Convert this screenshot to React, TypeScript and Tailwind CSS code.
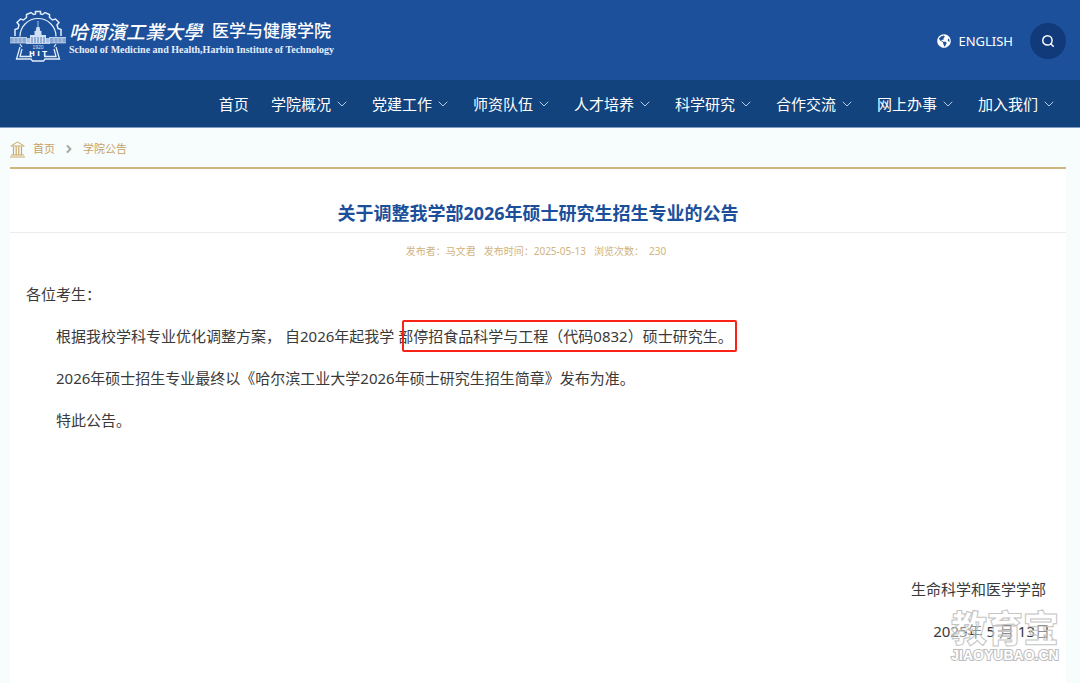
import { ChevronDown, ChevronRight, Search } from "lucide-react";
import { FaGlobeAmericas } from "react-icons/fa";

const navItems = [
    { title: "首页", hasMenu: false },
    { title: "学院概况", hasMenu: true },
    { title: "党建工作", hasMenu: true },
    { title: "师资队伍", hasMenu: true },
    { title: "人才培养", hasMenu: true },
    { title: "科学研究", hasMenu: true },
    { title: "合作交流", hasMenu: true },
    { title: "网上办事", hasMenu: true },
    { title: "加入我们", hasMenu: true },
];

function Emblem() {
    return (
        <svg width="56" height="52" viewBox="0 0 56 52" fill="none" stroke="#e3edfa" aria-hidden="true">
            {/* gear ring */}
            <path d="M5 26v-6.500l3-1 1-3.500-2-2.500L10.500 9l3 1 3-2.500V4.500L21 2.500l2.500 2 2-.5V1.500h5V4l2 .5 2.500-2 4.500 2v3l3 2.500 3-1L49 12.500 47 15l1 3.500 3 1V26" strokeWidth="1.500" />
            <path d="M10 26.500a18 18 0 0 1 36 0M10 34l2 3M46 34l-2 3" strokeWidth="1.200" />
            {/* main building */}
            <g fill="#cfe0f5" stroke="none">
                <path d="M27.600 11h.8v7h-.8zM26.500 17h3l.8 4h-4.600zM24.500 21h7v4h-7zM20 25h16v8H20z" />
                <path d="M0 27h17v6H0zM39 27h17v6H39z" fillOpacity="0.600" />
                <path d="M16 28h24v6H16z" fillOpacity="0.800" />
            </g>
            <path d="M0 27.500h17M39 27.500h17M0 33h56M4 28v5M8 28v5M12 28v5M44 28v5M48 28v5M52 28v5" strokeWidth="0.600" />
            <path d="M22 27v6M25 27v6M28 27v6M31 27v6M34 27v6" stroke="#1c509b" strokeWidth="0.700" />
            {/* open book */}
            <path d="M10 37 6.500 49H21l1.500 2h11l1.500-2h14.500L46 37M12 39l-2 7.500h12M44 39l2 7.500H34" strokeWidth="1.300" />
            <text x="28" y="39" textAnchor="middle" fill="#cfe0f5" stroke="none" className="font-['Liberation_Sans'] text-[5px]">1920</text>
            <text x="28" y="46" textAnchor="middle" fill="#fff" stroke="none" className="font-['DejaVu_Sans'] text-[7px] font-bold">H I T</text>
        </svg>
    );
}

function HallIcon() {
    return (
        <svg width="15" height="17" viewBox="0 0 15 17" fill="none" stroke="#cda869" aria-hidden="true">
            <path d="M0 16h15M1 14h13M.5 5h14M1.500 4.500l6-3.500 6 3.500" />
            <path d="M3.500 5.500V14M6.200 5.500V14M8.800 5.500V14M11.500 5.500V14" strokeWidth="1.200" />
        </svg>
    );
}

export default function App() {
    return (
        <div className="min-h-screen bg-[#f6fdfc] font-['Noto_Sans','Noto_Sans_CJK_SC',sans-serif]">
            <header className="bg-[#1c509b] text-white">
                <div className="flex h-20 items-center justify-between pl-[10px] pr-[14px]">
                    <a href="#" className="flex items-center gap-[3px] pb-2">
                        <Emblem />
                        <span className="flex flex-col pt-1">
                            <span className="flex items-center gap-[10px] whitespace-nowrap leading-6">
                                <span className="font-['Noto_Sans_CJK_TC',sans-serif] text-[19px] font-medium italic">哈爾濱工業大學</span>
                                <span className="text-[17px] font-medium">医学与健康学院</span>
                            </span>
                            <span className="whitespace-nowrap font-['Liberation_Serif',serif] text-[10px] font-bold leading-[14px] text-[#e6eefa]">
                                School of Medicine and Health,Harbin Institute of Technology
                            </span>
                        </span>
                    </a>
                    <div className="flex items-center gap-[17px] pt-[2px]">
                        <a href="#" className="flex items-center gap-[7px] text-[13px] leading-5">
                            <FaGlobeAmericas size={14} />
                            ENGLISH
                        </a>
                        <button type="button" aria-label="搜索" className="flex size-9 items-center justify-center rounded-full bg-[#113a7b]">
                            <Search size={14} strokeWidth={2.500} />
                        </button>
                    </div>
                </div>
                <nav className="flex h-12 items-center justify-end gap-[22px] border-b border-[#7f9dc1] bg-[#12437d] pr-[23px]">
                    {navItems.map((item) => (
                        <a key={item.title} href="#" className="flex items-center gap-[3px] whitespace-nowrap text-[15px] leading-6">
                            {item.title}
                            {item.hasMenu && <ChevronDown size={16} strokeWidth={1.500} className="text-[#b9cbe2]" />}
                        </a>
                    ))}
                </nav>
            </header>

            <main className="ml-[10px] mr-[14px]">
                <div className="flex h-[41px] items-center gap-2 border-b-2 border-[#d0b47f] pt-[3px] text-[11px] text-[#c6a266]">
                    <HallIcon />
                    <a href="#">首页</a>
                    <ChevronRight size={12} strokeWidth={4} className="text-[#a9a9a4]" />
                    <a href="#">学院公告</a>
                </div>

                <article className="relative min-h-[514px] bg-white">
                    <h1 className="border-b border-[#ececec] pb-[5px] pt-[30px] text-center text-[18px] font-bold leading-7 text-[#1c4f9b]">
                        关于调整我学部2026年硕士研究生招生专业的公告
                    </h1>
                    <p className="flex justify-center gap-2 pr-1 pt-2 text-[10px] leading-5 text-[#cfb481]">
                        <span>发布者：马文君</span>
                        <span>发布时间：2025-05-13</span>
                        <span>浏览次数：&nbsp; 230</span>
                    </p>

                    <div className="px-4 pt-3 text-[15px] leading-[42px] text-[#3a3a3a]">
                        <p>各位考生：</p>
                        <p className="indent-[30px]">
                            <span className="mr-1">根据我校学科专业优化调整方案，</span>自2026年起我学
                            <mark className="relative ml-1 bg-transparent text-inherit">
                                部停招食品科学与工程（代码0832）硕士研究生。
                                <span className="absolute -inset-y-[6px] -right-1 left-1 rounded-xs border-2 border-[#fa2117]" />
                            </mark>
                        </p>
                        <p className="indent-[30px]">2026年硕士招生专业最终以《哈尔滨工业大学2026年硕士研究生招生简章》发布为准。</p>
                        <p className="indent-[30px]">特此公告。</p>
                        <div className="pt-[127px] text-right">
                            <p className="pr-1">生命科学和医学学部</p>
                            <p>2025年 5 月 13日</p>
                        </div>
                    </div>

                    <div className="absolute bottom-5 right-[7px] flex flex-col items-center text-white/45 [-webkit-text-stroke:1px_#c4c4c4]">
                        <span className="text-[36px] font-black leading-9">教育宝</span>
                        <span className="font-['Liberation_Sans',sans-serif] text-[14px] font-bold leading-4 text-white [paint-order:stroke_fill] [-webkit-text-stroke:2px_#bdbdbd]">JIAOYUBAO.CN</span>
                    </div>
                </article>
            </main>
        </div>
    );
}
